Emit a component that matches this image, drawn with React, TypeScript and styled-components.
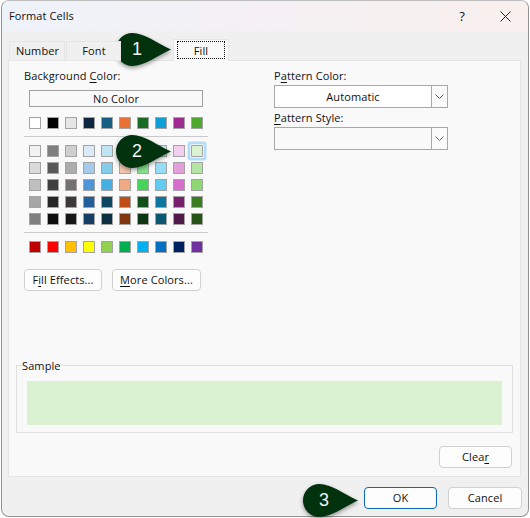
import React from "react";
import styled, { createGlobalStyle } from "styled-components";

const Global = createGlobalStyle`
  html, body { margin: 0; padding: 0; background: #fff; }
  body { width: 530px; height: 518px; overflow: hidden; font-family: "Open Sans", "Noto Sans", "Liberation Sans", sans-serif; }
  * { box-sizing: border-box; }
`;

const Stage = styled.div`
  position: relative;
  width: 530px;
  height: 518px;
  padding: 0 0 1px 1px;
  background: #ffffff;
`;
const Win = styled.div`
  width: 528px;
  height: 517px;
  display: flex;
  flex-direction: column;
  border: 1px solid #929292;
  border-top-color: #bdbdbd;
  border-radius: 8px;
  overflow: hidden;
  background: #f0f0f0;
  color: #111;
  font-size: 11px;
  letter-spacing: 0.1px;
`;
const TitleBar = styled.div`
  height: 30px;
  flex: none;
  display: flex;
  align-items: center;
  padding: 0 17px 0 7px;
  background: linear-gradient(90deg, #eef3f9 0%, #f5f0f3 55%, #f8f0ee 100%);
`;
const Title = styled.div`
  flex: 1;
  font-size: 11px;
  padding-bottom: 2px;
`;
const Help = styled.span`
  font-size: 13px;
  margin-right: 35px;
`;
const Body = styled.div`
  flex: 1;
  display: flex;
  flex-direction: column;
  padding: 8px 7px 0 6px;
`;
const Tabs = styled.div`
  height: 22px;
  flex: none;
  display: flex;
  align-items: flex-end;
  padding-left: 1px;
  position: relative;
  z-index: 1;
`;
const Tab = styled.div<{ $w: number; $active?: boolean; $skip?: number }>`
  width: ${(p) => p.$w}px;
  height: ${(p) => (p.$active ? 22 : 20)}px;
  margin-right: 1px;
  margin-left: ${(p) => p.$skip ?? 0}px;
  padding-bottom: 1px;
  padding-left: ${(p) => (p.$active ? 0 : 1)}px;
  display: flex;
  align-items: center;
  justify-content: center;
  background: ${(p) => (p.$active ? "#f9f9f9" : "#f0f0f0")};
  border: 1px solid #e6e6e6;
  border-bottom: ${(p) => (p.$active ? "none" : "1px solid #e6e6e6")};
`;
const FocusLabel = styled.span`
  width: 46px;
  height: 16px;
  display: flex;
  align-items: center;
  justify-content: center;
  outline: 1px dotted #111;
`;
const Panel = styled.div`
  height: 417px;
  flex: none;
  margin-top: -1px;
  background: #f9f9f9;
  border: 1px solid #e5e5e5;
  padding: 7px 7px 0 7px;
  display: flex;
  flex-direction: column;
`;
const Columns = styled.div`
  height: 297px;
  flex: none;
  display: flex;
`;
const LeftCol = styled.div`
  width: 258px;
  flex: none;
  padding-left: 8px;
  display: flex;
  flex-direction: column;
`;
const RightCol = styled.div`
  flex: 1;
  display: flex;
  flex-direction: column;
`;
const Label = styled.div<{ $top?: number }>`
  height: 16px;
  line-height: 16px;
  margin-top: ${(p) => p.$top ?? 0}px;
`;
const U = styled.span`
  text-decoration: underline;
  text-underline-offset: 2px;
`;
const NoColor = styled.div`
  width: 174px;
  height: 17px;
  margin: 6px 0 0 5px;
  display: flex;
  align-items: center;
  justify-content: center;
  border: 1px solid #a0a0a0;
  background: #f9f9f9;
`;
const Grid = styled.div<{ $top: number }>`
  display: grid;
  grid-template-columns: repeat(10, 12px);
  column-gap: 6px;
  row-gap: 5px;
  margin: ${(p) => p.$top}px 0 0 5px;
`;
const Swatch = styled.div<{ $c: string; $sel?: boolean }>`
  width: 12px;
  height: 12px;
  background: ${(p) => p.$c};
  border: 1px solid #a3a3a3;
  ${(p) =>
    p.$sel
      ? "box-shadow: 0 0 0 1px #e6f3fc, 0 0 0 3.5px #b4dcf8; border-radius: 1px;"
      : ""}
`;
const Rule = styled.div<{ $top: number }>`
  width: 184px;
  height: 1px;
  margin-top: ${(p) => p.$top}px;
  background: #c9c9c9;
`;
const ButtonRow = styled.div`
  display: flex;
  gap: 10px;
  margin-top: 16px;
`;
const Btn = styled.div<{ $w: number; $primary?: boolean }>`
  width: ${(p) => p.$w}px;
  height: 22px;
  flex: none;
  display: flex;
  align-items: center;
  justify-content: center;
  padding-bottom: 2px;
  background: #fdfdfd;
  border: 1px solid ${(p) => (p.$primary ? "#0b67b5" : "#d0d0d0")};
  border-radius: 4px;
`;
const Select = styled.div<{ $white?: boolean }>`
  width: 174px;
  height: 23px;
  margin-top: 1px;
  display: flex;
  border: 1px solid #a8a8a8;
  background: ${(p) => (p.$white ? "#ffffff" : "#f9f9f9")};
`;
const SelectValue = styled.div`
  flex: 1;
  display: flex;
  align-items: center;
  justify-content: center;
`;
const Arrow = styled.div`
  width: 16px;
  display: flex;
  align-items: center;
  justify-content: center;
  background: #fbfbfb;
  border-left: 1px solid #a8a8a8;
`;
const Fieldset = styled.div`
  position: relative;
  height: 68px;
  width: 497px;
  flex: none;
  border: 1px solid #e0e0e0;
  padding: 15px 10px 7px 10px;
`;
const Legend = styled.span`
  position: absolute;
  top: -8px;
  left: 5px;
  background: #f9f9f9;
  line-height: 16px;
`;
const SampleFill = styled.div`
  height: 44px;
  background: #dbf2d2;
`;
const ClearRow = styled.div`
  display: flex;
  justify-content: flex-end;
  margin: 13px 1px 0 0;
`;
const Footer = styled.div`
  flex: 1;
  display: flex;
  justify-content: flex-end;
  gap: 11px;
  padding-top: 10px;
  margin-right: -1px;
`;
const Callout = styled.svg<{ $x: number; $y: number }>`
  position: absolute;
  left: ${(p) => p.$x}px;
  top: ${(p) => p.$y}px;
  overflow: visible;
`;
const Badge = styled.span<{ $x: number; $y: number }>`
  position: absolute;
  left: ${(p) => p.$x}px;
  top: ${(p) => p.$y}px;
  width: 20px;
  text-align: center;
  color: #f4f4f4;
  font: 18px/20px "Liberation Sans", Arial, sans-serif;
`;

const top = ["#ffffff", "#000000", "#e7e6e6", "#0e2841", "#156082", "#e97132", "#196b24", "#0f9ed5", "#a02b93", "#4ea72e"];
const rows = [
  ["#f2f2f2", "#7f7f7f", "#d0cece", "#dbe9f8", "#c1e4f5", "#fbe3d6", "#c1f0c8", "#caedfb", "#f2cfee", "#daf2d0"],
  ["#d9d9d9", "#595959", "#aeabab", "#a6caec", "#83cbeb", "#f6c6ad", "#83e28e", "#95dcf7", "#e59edc", "#b4e5a2"],
  ["#bfbfbf", "#404040", "#757070", "#4e95d9", "#45b0e1", "#f1a983", "#47d45a", "#61cbf3", "#d86dcd", "#8dd873"],
  ["#a6a6a6", "#262626", "#3a3838", "#215f9a", "#0f4761", "#c04f15", "#124f1a", "#0b76a0", "#78206e", "#3a7c22"],
  ["#7f7f7f", "#0d0d0d", "#171616", "#163e64", "#0a2f41", "#80350e", "#0d3512", "#095770", "#511b49", "#275317"],
];
const bottom = ["#c00000", "#ff0000", "#ffc000", "#ffff00", "#92d050", "#00b050", "#00b0f0", "#0070c0", "#002060", "#7030a0"];

const Pin = ({ x, y }: { x: number; y: number }) => (
  <Callout $x={x} $y={y} width={55} height={33} viewBox="0 0 55 33">
    <defs>
      <filter id={`s${x}${y}`} x="-20%" y="-20%" width="140%" height="150%">
        <feDropShadow dx="0" dy="2" stdDeviation="2" floodColor="#000" floodOpacity="0.4" />
      </filter>
    </defs>
    <path
      d="M16.5 0C7.4 0 0 7.4 0 16.5S7.4 33 16.5 33C28 33 41 23 55 16.5 41 10 28 0 16.5 0Z"
      fill="#06300f"
      filter={`url(#s${x}${y})`}
    />
  </Callout>
);

const ChevronSvg = () => (
  <svg width="9" height="5" viewBox="0 0 9 5">
    <path d="M.5.5 4.5 4.5 8.5.5" fill="none" stroke="#666" strokeWidth="1" />
  </svg>
);

const CloseSvg = () => (
  <svg width="11" height="11" viewBox="0 0 11 11">
    <path d="M.5.5l10 10M10.5.5l-10 10" fill="none" stroke="#222" strokeWidth="1" />
  </svg>
);

export default function App() {
  return (
    <Stage>
      <Global />
      <Win>
        <TitleBar>
          <Title>Format Cells</Title>
          <Help>?</Help>
          <CloseSvg />
        </TitleBar>
        <Body>
          <Tabs>
            <Tab $w={56}>Number</Tab>
            <Tab $w={55}>Font</Tab>
            <Tab $w={56} $active $skip={51}>
              <FocusLabel>Fill</FocusLabel>
            </Tab>
          </Tabs>
          <Panel>
            <Columns>
              <LeftCol>
                <Label>
                  Background <U>C</U>olor:
                </Label>
                <NoColor>No Color</NoColor>
                <Grid $top={10}>
                  {top.map((c, i) => (
                    <Swatch key={i} $c={c} />
                  ))}
                </Grid>
                <Rule $top={7} />
                <Grid $top={8}>
                  {rows.flat().map((c, i) => (
                    <Swatch key={i} $c={c} $sel={i === 9} />
                  ))}
                </Grid>
                <Rule $top={7} />
                <Grid $top={8}>
                  {bottom.map((c, i) => (
                    <Swatch key={i} $c={c} />
                  ))}
                </Grid>
                <ButtonRow>
                  <Btn $w={78}>
                    <span>
                      F<U>i</U>ll Effects...
                    </span>
                  </Btn>
                  <Btn $w={89}>
                    <span>
                      <U>M</U>ore Colors...
                    </span>
                  </Btn>
                </ButtonRow>
              </LeftCol>
              <RightCol>
                <Label>
                  P<U>a</U>ttern Color:
                </Label>
                <Select $white>
                  <SelectValue>Automatic</SelectValue>
                  <Arrow>
                    <ChevronSvg />
                  </Arrow>
                </Select>
                <Label $top={2}>
                  <U>P</U>attern Style:
                </Label>
                <Select>
                  <SelectValue />
                  <Arrow>
                    <ChevronSvg />
                  </Arrow>
                </Select>
              </RightCol>
            </Columns>
            <Fieldset>
              <Legend>Sample</Legend>
              <SampleFill />
            </Fieldset>
            <ClearRow>
              <Btn $w={73}>
                <span>
                  Clea<U>r</U>
                </span>
              </Btn>
            </ClearRow>
          </Panel>
          <Footer>
            <Btn $w={73} $primary>OK</Btn>
            <Btn $w={74}>Cancel</Btn>
          </Footer>
        </Body>
      </Win>
      <Pin x={116} y={33} />
      <Badge $x={127} $y={39}>1</Badge>
      <Pin x={116} y={135} />
      <Badge $x={127} $y={141}>2</Badge>
      <Pin x={303} y={484} />
      <Badge $x={314} $y={490}>3</Badge>
    </Stage>
  );
}
